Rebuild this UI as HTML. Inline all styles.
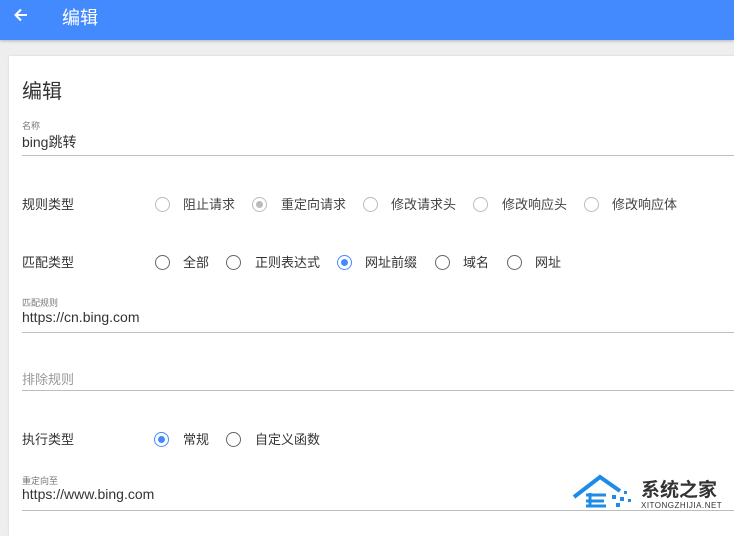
<!DOCTYPE html>
<html><head><meta charset="utf-8"><style>
*{margin:0;padding:0;box-sizing:border-box}
body{width:734px;height:522px;overflow:hidden;background:#eeeeee;font-family:"Liberation Sans","Noto Sans CJK SC",sans-serif;position:relative;color:#333}
.hdr{position:absolute;left:0;top:0;width:734px;height:40px;background:#448aff;box-shadow:0 1px 3px rgba(0,0,0,.25)}
.card{position:absolute;left:9px;top:56px;width:740px;height:480px;background:#fff;box-shadow:0 0 2px rgba(0,0,0,.12)}
.a{position:absolute;white-space:nowrap}
.ln{position:absolute;left:22px;width:720px;height:1px;background:#bdbdbd}
.r{position:absolute;width:15px;height:15px;border-radius:50%;border:1.5px solid #666}
.r.d{border-color:#bbb}
.r.s{border-color:#448aff}
.r.s::after{content:"";position:absolute;left:2.5px;top:2.5px;width:7px;height:7px;border-radius:50%;background:#448aff}
.r.ds{border-color:#bbb}
.r.ds::after{content:"";position:absolute;left:2.5px;top:2.5px;width:7px;height:7px;border-radius:50%;background:#bbb}
.t{font-size:13px;color:#333}
.sm{font-size:9px;color:#777}
</style></head><body>
<div class="hdr">
<svg style="position:absolute;left:12px;top:6px" width="18" height="18" viewBox="0 0 18 18"><path d="M15 9H4M9 3.5L3.5 9L9 14.5" stroke="#fff" stroke-width="2" fill="none"/></svg>
<div class="a" style="left:62px;top:4px;font-size:18px;color:#fff">编辑</div>
</div>
<div class="card"></div>
<div class="a" style="left:22px;top:75px;font-size:20px;color:#333">编辑</div>
<div class="a sm" style="left:22px;top:119px">名称</div>
<div class="a t" style="left:22px;top:132px;font-size:14px">bing跳转</div>
<div class="ln" style="top:155px"></div>

<div class="a t" style="left:22px;top:194px">规则类型</div>
<div class="r d" style="left:155px;top:197px"></div><div class="a t" style="left:183px;top:194px;color:#444">阻止请求</div>
<div class="r ds" style="left:252px;top:197px"></div><div class="a t" style="left:281px;top:194px;color:#444">重定向请求</div>
<div class="r d" style="left:363px;top:197px"></div><div class="a t" style="left:391px;top:194px;color:#444">修改请求头</div>
<div class="r d" style="left:473px;top:197px"></div><div class="a t" style="left:502px;top:194px;color:#444">修改响应头</div>
<div class="r d" style="left:584px;top:197px"></div><div class="a t" style="left:612px;top:194px;color:#444">修改响应体</div>

<div class="a t" style="left:22px;top:252px">匹配类型</div>
<div class="r" style="left:155px;top:255px"></div><div class="a t" style="left:183px;top:252px">全部</div>
<div class="r" style="left:226px;top:255px"></div><div class="a t" style="left:255px;top:252px">正则表达式</div>
<div class="r s" style="left:337px;top:255px"></div><div class="a t" style="left:365px;top:252px">网址前缀</div>
<div class="r" style="left:435px;top:255px"></div><div class="a t" style="left:463px;top:252px">域名</div>
<div class="r" style="left:507px;top:255px"></div><div class="a t" style="left:535px;top:252px">网址</div>

<div class="a sm" style="left:22px;top:296px">匹配规则</div>
<div class="a t" style="left:22px;top:309px;font-size:14px">https://cn.bing.com</div>
<div class="ln" style="top:332px"></div>

<div class="a t" style="left:22px;top:369px;color:#999">排除规则</div>
<div class="ln" style="top:390px"></div>

<div class="a t" style="left:22px;top:429px">执行类型</div>
<div class="r s" style="left:154px;top:432px"></div><div class="a t" style="left:183px;top:429px">常规</div>
<div class="r" style="left:226px;top:432px"></div><div class="a t" style="left:255px;top:429px">自定义函数</div>

<div class="a sm" style="left:22px;top:474px">重定向至</div>
<div class="a t" style="left:22px;top:486px;font-size:14px">https://www.bing.com</div>
<div class="ln" style="top:510px"></div>

<svg style="position:absolute;left:572px;top:473px" width="65" height="35" viewBox="0 0 65 35">
<path d="M2 24L28 4L48 18" stroke="#1e8ce6" stroke-width="4" fill="none"/>
<path d="M14 22h20M14 28h18M14 33h20M18 20v14" stroke="#1e8ce6" stroke-width="3" fill="none"/>
<g fill="#1e8ce6"><rect x="40" y="22" width="4" height="4"/><rect x="48" y="24" width="4" height="4"/><rect x="56" y="26" width="3" height="3"/><rect x="44" y="30" width="4" height="4"/><rect x="52" y="18" width="3" height="3"/></g>
</svg>
<div class="a" style="left:641px;top:475px;font-size:19px;font-weight:bold;color:#333">系统之家</div>
<div class="a" style="left:641px;top:501px;font-size:8px;color:#333;letter-spacing:.5px">XITONGZHIJIA.NET</div>
</body></html>
